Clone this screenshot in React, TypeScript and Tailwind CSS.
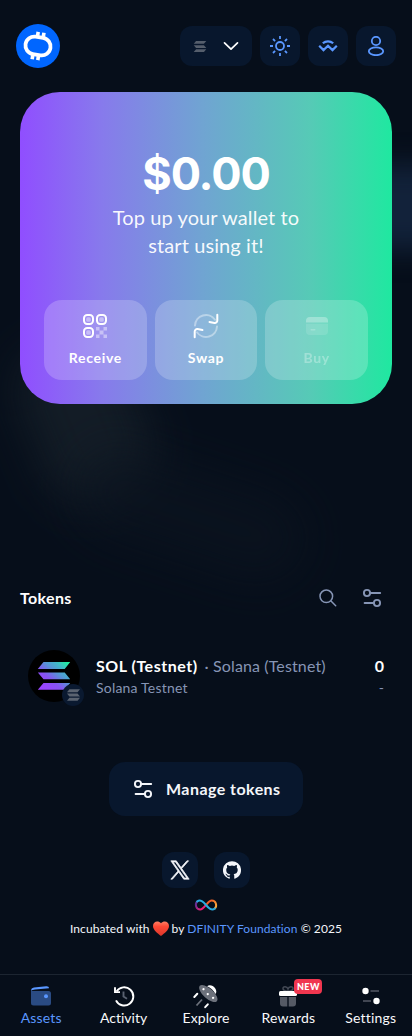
import React from "react";

type IconProps = { className?: string };

function SolanaBars({ className }: IconProps) {
  return (
    <svg viewBox="0 0 32 28" className={className} fill="currentColor">
      <path d="M6 0h26l-6 7H0z" />
      <path d="M0 10.500h26l6 7H6z" />
      <path d="M6 21h26l-6 7H0z" />
    </svg>
  );
}

function OisyLogo() {
  return (
    <svg viewBox="0 0 44 44" className="size-11 shrink-0">
      <circle cx="22" cy="22" r="22" fill="#0066ff" />
      <g transform="rotate(9 22 22)" fill="none" stroke="#fff">
        <rect x="9.400" y="13.200" width="25.200" height="17.600" rx="8.800" strokeWidth="3.800" />
        <path d="M20 8v4M25.800 8v4M18.300 32v4M24 32v4" strokeWidth="3.600" />
      </g>
    </svg>
  );
}

function Chevron() {
  return (
    <svg viewBox="0 0 16 10" className="h-2.5 w-4" fill="none" stroke="#fff" strokeWidth="1.700" strokeLinecap="round" strokeLinejoin="round">
      <path d="M1.500 1.800 8 8.200l6.500-6.400" />
    </svg>
  );
}

function SunIcon() {
  return (
    <svg viewBox="0 0 20 20" className="size-5" fill="none" stroke="#5a97ff" strokeWidth="1.800">
      <circle cx="10" cy="10" r="4" />
      <path d="M10 0v3M10 17v3M0 10h3M17 10h3M3 3l2.100 2.100M14.900 14.900 17 17M3 17l2.100-2.100M14.900 5.100 17 3" />
    </svg>
  );
}

function WalletConnectIcon() {
  return (
    <svg viewBox="0 0 20 14" className="h-[14px] w-5" fill="none" stroke="#5a97ff" strokeWidth="2.200">
      <path d="M4.800 4.300c3-2.700 7.400-2.700 10.400 0" />
      <path d="m1.200 6.800 4.300 4.300L10 6.800l4.500 4.300 4.300-4.300" />
    </svg>
  );
}

function UserIcon() {
  return (
    <svg viewBox="0 0 20 20" className="size-5" fill="none" stroke="#5a97ff" strokeWidth="1.800">
      <circle cx="10" cy="5" r="4.200" />
      <ellipse cx="10" cy="15.300" rx="7.200" ry="3.900" />
    </svg>
  );
}

function QrIcon() {
  return (
    <svg viewBox="0 0 24 24" className="size-6" fill="none" stroke="#fff">
      <g strokeWidth="2">
        <rect x="1" y="1" width="9" height="9" rx="3.200" />
        <rect x="14" y="1" width="9" height="9" rx="3.200" />
        <rect x="1" y="14" width="9" height="9" rx="3.200" />
      </g>
      <g fill="#fff" fillOpacity=".42" stroke="none">
        <rect x="3.200" y="3.200" width="4.600" height="4.600" rx="1.500" />
        <rect x="16.200" y="3.200" width="4.600" height="4.600" rx="1.500" />
        <rect x="3.200" y="16.200" width="4.600" height="4.600" rx="1.500" />
        <path d="M13 13h3.500v3.500H13zM20.500 13H24v3.500h-3.500zM16.500 16.500h4v4h-4zM13 20.500h3.500V24H13zM20.500 20.500H24V24h-3.500z" />
      </g>
    </svg>
  );
}

function SwapIcon() {
  return (
    <svg viewBox="0 0 24 24" className="size-6 overflow-visible" fill="none" stroke="#fff" strokeWidth="2" strokeLinecap="round" strokeLinejoin="round">
      <path opacity=".4" d="M1 11.500a11 11 0 0 1 20-5.800M23 12.500a11 11 0 0 1-20 5.800" />
      <path d="M23.300.8v5.600a2.500 2.500 0 0 1-2.800 2.500l-5-1M.7 23.200v-5.600a2.500 2.500 0 0 1 2.800-2.500l5 1" />
    </svg>
  );
}

function CardIcon() {
  return (
    <svg viewBox="0 0 24 24" className="size-6" fill="#fff">
      <path d="M1 8.500V7a4 4 0 0 1 4-4h14a4 4 0 0 1 4 4v1.500z" />
      <path opacity=".4" d="M1 9.700h22V17a4 4 0 0 1-4 4H5a4 4 0 0 1-4-4z" />
      <rect x="5.500" y="15" width="5" height="1.500" rx=".7" />
    </svg>
  );
}

function SlidersIcon({ className }: IconProps) {
  return (
    <svg viewBox="0 0 20 20" className={className} fill="none" stroke="currentColor" strokeWidth="1.900" strokeLinecap="round">
      <circle cx="5" cy="5" r="3.100" />
      <path d="M8.300 5h9.900M2.600 15h8.800" />
      <circle cx="15" cy="15" r="3.100" />
    </svg>
  );
}

function SearchIcon() {
  return (
    <svg viewBox="0 0 18 18" className="size-[18px]" fill="none" stroke="#8695b5" strokeWidth="1.500" strokeLinecap="round">
      <circle cx="7.300" cy="7.300" r="6.300" />
      <path d="m12 12 4.700 4.700" />
    </svg>
  );
}

function SolToken() {
  return (
    <div className="relative size-13 shrink-0 rounded-full bg-black">
      <svg viewBox="0 0 52 52" className="size-13">
        <defs>
          <linearGradient id="sol" x1="13" y1="40" x2="39" y2="10" gradientUnits="userSpaceOnUse">
            <stop offset=".1" stopColor="#9945ff" />
            <stop offset=".35" stopColor="#8752f3" />
            <stop offset=".6" stopColor="#5497d5" />
            <stop offset=".75" stopColor="#43b4ca" />
            <stop offset="1" stopColor="#19fb9b" />
          </linearGradient>
        </defs>
        <path fill="url(#sol)" d="M15.500 12h26.700l-5.500 7H9.800zM9.800 22.400h26.900l5.500 6.800H15.500zM15.500 33h26.700l-5.500 6.800H9.800z" />
      </svg>
      <div className="absolute top-[34px] left-[34px] flex size-[22px] items-center justify-center rounded-full bg-[#0a1930]">
        <SolanaBars className="h-3 w-[13px] text-[#5b6370]" />
      </div>
    </div>
  );
}

function XIcon() {
  return (
    <svg viewBox="0 0 24 24" className="size-5" fill="#f4f6fa">
      <path d="M14.090 10.320 22.280 1h-1.940l-7.110 8.090L7.550 1H1l8.590 12.230L1 23h1.940l7.510-8.540L16.450 23H23zM11.430 13.350l-.87-1.220L3.640 2.430h2.980l5.590 7.830.87 1.220 7.260 10.170h-2.980z" stroke="#f4f6fa" strokeWidth=".9" />
    </svg>
  );
}

function GithubIcon() {
  return (
    <svg viewBox="0 0 24 24" className="size-[18px]" fill="#f4f6fa">
      <path d="M12 .3a12 12 0 0 0-3.800 23.400c.6.100.8-.3.800-.6v-2c-3.300.7-4-1.600-4-1.600-.6-1.400-1.400-1.800-1.400-1.800-1-.7.100-.7.100-.7 1.200 0 1.900 1.200 1.900 1.200 1 1.800 2.800 1.300 3.500 1 0-.8.400-1.300.7-1.600-2.700-.3-5.500-1.300-5.500-6 0-1.200.5-2.300 1.300-3.100-.2-.4-.6-1.600 0-3.200 0 0 1-.3 3.400 1.200a11.500 11.500 0 0 1 6 0c2.300-1.500 3.300-1.200 3.300-1.200.6 1.600.2 2.800 0 3.200.9.800 1.300 1.900 1.300 3.200 0 4.600-2.800 5.600-5.500 5.900.5.400.9 1 .9 2.200v3.300c0 .3.100.7.800.6A12 12 0 0 0 12 .3" />
    </svg>
  );
}

function InfinityLogo() {
  return (
    <svg viewBox="0 0 24 12" className="h-3 w-6" fill="none" strokeWidth="2" strokeLinecap="round">
      <defs>
        <linearGradient id="warm" x1="12" x2="23" y1="1" y2="8" gradientUnits="userSpaceOnUse">
          <stop offset=".3" stopColor="#f15a24" />
          <stop offset="1" stopColor="#fbb03b" />
        </linearGradient>
        <linearGradient id="pink" x1="1" x2="10" y1="3" y2="10" gradientUnits="userSpaceOnUse">
          <stop offset=".2" stopColor="#662d91" />
          <stop offset=".8" stopColor="#ed1e79" />
        </linearGradient>
      </defs>
      <path stroke="url(#pink)" d="M3.200 2.500C.6 5 2 10.500 6.200 10.500c2.300 0 4.100-2.500 5.800-4.500" />
      <path stroke="url(#warm)" d="M12 6c1.700-2 3.500-4.500 5.800-4.500 4.200 0 5.600 5.500 3 8" />
      <path stroke="#29abe2" d="M3.200 2.500C6.300-.2 9.400 2.900 12 6s5.700 6.200 8.800 3.500" />
    </svg>
  );
}

function HeartIcon() {
  return (
    <svg viewBox="0 0 16 15" className="mx-[3px] inline h-[15px] w-4 align-[-3px]">
      <defs>
        <linearGradient id="heart" x1="0" x2="0" y1="0" y2="1">
          <stop offset="0" stopColor="#ff8065" />
          <stop offset=".35" stopColor="#ff4935" />
          <stop offset="1" stopColor="#d9362b" />
        </linearGradient>
      </defs>
      <path fill="url(#heart)" d="M8 2.300C10.500-1 16 0 16 5c0 4-4.500 7.300-8 10C4.500 12.300 0 9 0 5 0 0 5.500-1 8 2.300" />
    </svg>
  );
}

function WalletIcon() {
  return (
    <svg viewBox="0 0 24 24" className="size-6">
      <path fill="#2a4b83" d="M2 7h17.500A2.500 2.500 0 0 1 22 9.500V19a2.500 2.500 0 0 1-2.500 2.500h-15A2.500 2.500 0 0 1 2 19z" />
      <path d="M2 7c0-2 1-3.200 3-3.500l12-1.300c2-.2 3 .6 3 2L6 5.500C4.500 5.700 3 6 2 7" fill="#5a97ff" />
      <circle cx="17" cy="12.300" r="2" fill="#5a97ff" />
    </svg>
  );
}

function HistoryIcon() {
  return (
    <svg viewBox="0 0 24 24" className="size-6" fill="none" stroke="#fff" strokeWidth="1.900">
      <path d="M4 6.800A9.100 9.100 0 1 1 3.500 15.500" transform="translate(.5 .8)" />
      <path d="M3 3.200v4.900h5" />
      <path stroke="#596170" d="M11.500 7.500v5l3.500 2.200" />
    </svg>
  );
}

function SaucerIcon() {
  return (
    <svg viewBox="0 0 24 24" className="size-6 overflow-visible">
      <g transform="rotate(42 14.300 9.500)">
        <ellipse cx="14.300" cy="9.500" rx="11.500" ry="5" fill="#6c717b" />
        <path fill="#fff" d="M8.600 5C9-.5 19.600-.5 20 5c-3.500-1.200-8-1.200-11.400 0" />
        <g fill="#fff">
          <circle cx="7.800" cy="9.500" r="1.150" />
          <circle cx="14.300" cy="10.300" r="1.150" />
          <circle cx="20.800" cy="9.500" r="1.150" />
        </g>
      </g>
      <path d="M3.300 9.800.3 13M13.800 20.300l-2.600 2.900" stroke="#fff" strokeWidth="2" strokeLinecap="round" />
      <path d="m8 15.500-5.500 6" stroke="#6c717b" strokeWidth="1.800" />
    </svg>
  );
}

function GiftIcon() {
  return (
    <svg viewBox="0 0 24 24" className="size-6">
      <path d="M12 7C10 7 7 7 7 4.500S11 2 12 5c1-3 5-3 5-.5S14 7 12 7" fill="none" stroke="#444a56" strokeWidth="1.500" />
      <rect x="3" y="7" width="18" height="5" rx="1.500" fill="#fff" />
      <path fill="#555a65" d="M4 13h7.300v9.500H7a3 3 0 0 1-3-3zM12.700 13H20v6.500a3 3 0 0 1-3 3h-4.300z" />
    </svg>
  );
}

function SettingsIcon() {
  return (
    <svg viewBox="0 0 24 24" className="size-6">
      <path d="M11.500 7H20M4 17h8" stroke="#555a65" strokeWidth="1.500" />
      <circle cx="6.500" cy="7" r="3.200" fill="#fff" />
      <circle cx="17.500" cy="17" r="3.200" fill="#fff" />
    </svg>
  );
}

function NavItem({ label, tracking, active, children }: { label: string; tracking: string; active?: boolean; children: React.ReactNode }) {
  return (
    <div className={`flex flex-1 flex-col items-center pt-[9px] text-sm leading-5 ${active ? "text-[#5a97ff]" : "text-[#f8f9fb]"}`}>
      <div className="relative size-6">{children}</div>
      <span className={tracking}>{label}</span>
    </div>
  );
}

function Action({ label, faded, children }: { label: string; faded?: boolean; children: React.ReactNode }) {
  return (
    <div className="flex h-20 flex-1 flex-col items-center rounded-[18px] bg-white/20 pt-3.5 text-white">
      <div className={`flex flex-col items-center gap-2.5 ${faded ? "opacity-30" : ""}`}>
        {children}
        <span className="text-sm leading-5 font-bold tracking-[0.7px]">{label}</span>
      </div>
    </div>
  );
}

export default function App() {
  return (
    <div className="relative isolate flex h-[1036px] w-full flex-col overflow-hidden bg-[#060e1a] font-['Lato',sans-serif] text-white">
      <div className="absolute top-[340px] left-[30px] -z-10 h-[160px] w-[110px] rotate-[-22deg] rounded-[40px] bg-[#18222b]/70 blur-[22px]" />
      <div className="absolute top-[470px] left-[70px] -z-10 h-[90px] w-[240px] rotate-[18deg] rounded-full bg-[#0b141f]/60 blur-[22px]" />
      <div className="absolute top-[165px] left-[350px] -z-10 h-[85px] w-[120px] rounded-[30px] bg-[#12223a] blur-[14px]" />

      <header className="flex h-[92px] items-center justify-between px-4">
        <OisyLogo />
        <div className="flex gap-2">
          <div className="flex h-10 w-[72px] items-center rounded-xl bg-[#08172d] pr-[13px] pl-[13px]">
            <SolanaBars className="h-[11px] w-[14px] text-[#555e6c]" />
            <div className="ml-auto"><Chevron /></div>
          </div>
          <div className="flex size-10 items-center justify-center rounded-xl bg-[#08172d]"><SunIcon /></div>
          <div className="flex size-10 items-center justify-center rounded-xl bg-[#08172d]"><WalletConnectIcon /></div>
          <div className="flex size-10 items-center justify-center rounded-xl bg-[#08172d]"><UserIcon /></div>
        </div>
      </header>

      <section className="mx-5 flex h-[312px] shrink-0 flex-col items-center rounded-[40px] bg-[linear-gradient(90deg,#904eff_0%,#877aec_22%,#70a4d2_49%,#56cab6_78%,#1fe8a0_100%)] px-6 pt-[56px]">
        <div className="font-['Inter',sans-serif] text-[45px] leading-[52px] font-bold tracking-[-1.1px]">$0.00</div>
        <p className="mt-[3px] text-center text-xl leading-7 tracking-[0.1px] text-white/95">
          Top up your wallet to
          <br />
          start using it!
        </p>
        <div className="mt-[41px] flex w-full gap-2">
          <Action label="Receive"><QrIcon /></Action>
          <Action label="Swap"><SwapIcon /></Action>
          <Action label="Buy" faded><CardIcon /></Action>
        </div>
      </section>

      <div className="mt-[182px] flex h-6 shrink-0 items-center px-5">
        <h2 className="text-base leading-6 font-bold tracking-[0.35px]">Tokens</h2>
        <div className="mr-[10px] ml-auto flex items-center gap-[25px] text-[#8695b5]">
          <SearchIcon />
          <SlidersIcon className="size-5" />
        </div>
      </div>

      <div className="mt-10 flex h-[52px] shrink-0 pr-7 pl-7">
        <SolToken />
        <div className="ml-4 pt-1">
          <div className="flex text-base leading-6 whitespace-nowrap">
            <span className="font-bold tracking-[0.52px]">SOL (Testnet)</span>
            <span className="ml-[7px] tracking-[0.12px] text-[#8695b5]">· Solana (Testnet)</span>
          </div>
          <div className="text-sm leading-5 tracking-[0.2px] text-[#8695b5]">Solana Testnet</div>
        </div>
        <div className="ml-auto pt-1 text-right">
          <div className="text-base leading-6 font-bold">0</div>
          <div className="text-sm leading-5 text-[#8695b5]">-</div>
        </div>
      </div>

      <div className="mx-auto mt-[60px] flex h-[54px] w-[194px] shrink-0 items-center rounded-2xl bg-[#08172d] pl-6 text-[#f4f6fa]">
        <SlidersIcon className="size-5" />
        <span className="ml-[13px] text-base font-bold tracking-[0.45px] whitespace-nowrap">Manage tokens</span>
      </div>

      <footer className="mt-9 flex flex-col items-center">
        <div className="flex gap-4">
          <div className="flex size-9 items-center justify-center rounded-xl bg-[#08172d]"><XIcon /></div>
          <div className="flex size-9 items-center justify-center rounded-xl bg-[#08172d]"><GithubIcon /></div>
        </div>
        <div className="mt-[11px]"><InfinityLogo /></div>
        <p className="mt-2 text-xs leading-5 tracking-[0.08px] whitespace-nowrap text-[#f4f6fa]">
          Incubated with<HeartIcon />by <span className="text-[#5a97ff]">DFINITY Foundation</span> © 2025
        </p>
      </footer>

      <nav className="mt-auto flex h-[62px] shrink-0 border-t border-[#1c2531]">
        <NavItem label="Assets" tracking="tracking-[0.15px]" active><WalletIcon /></NavItem>
        <NavItem label="Activity" tracking="tracking-[0.01px]"><HistoryIcon /></NavItem>
        <NavItem label="Explore" tracking="tracking-[0.1px]"><SaucerIcon /></NavItem>
        <NavItem label="Rewards" tracking="tracking-[0.25px]">
          <GiftIcon />
          <span className="absolute -top-[5px] left-[18px] flex h-[15px] w-7 items-center justify-center rounded bg-[#f0364f] text-[9px] font-black tracking-[0.4px] text-white">NEW</span>
        </NavItem>
        <NavItem label="Settings" tracking="tracking-[0.2px]"><SettingsIcon /></NavItem>
      </nav>
    </div>
  );
}
